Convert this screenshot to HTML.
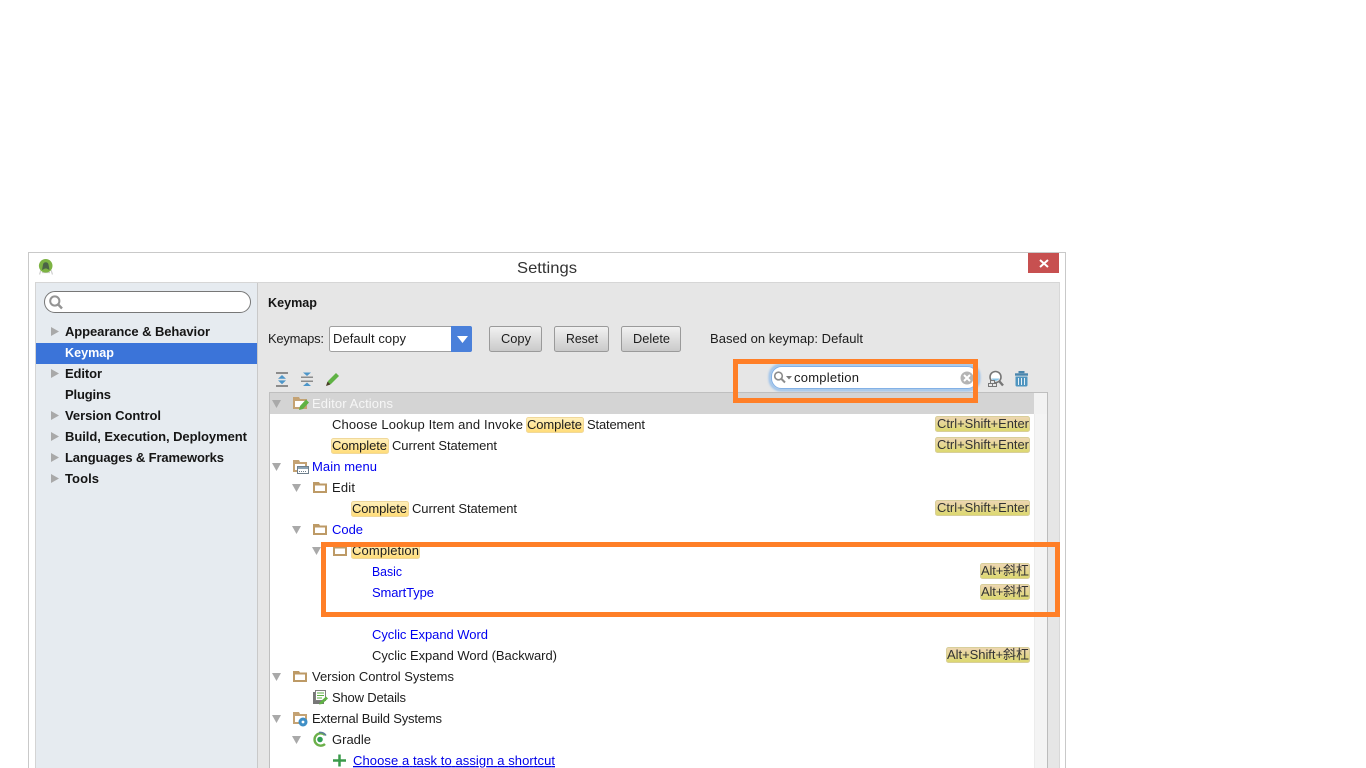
<!DOCTYPE html>
<html lang="en">
<head>
<meta charset="utf-8">
<title>Settings</title>
<style>
html,body{margin:0;padding:0;background:#fff;width:1366px;height:768px;overflow:hidden}
svg{display:block}
text{font-family:"Liberation Sans","Noto Sans CJK SC",sans-serif;font-size:13px;fill:#1c1c1c}
.b{font-weight:bold;fill:#151515}
.l{fill:#0000f0}
.k{fill:#333}
</style>
</head>
<body>
<svg width="1366" height="768" viewBox="0 0 1366 768" xmlns="http://www.w3.org/2000/svg">
<defs>
<linearGradient id="btn" x1="0" y1="0" x2="0" y2="1"><stop offset="0" stop-color="#f2f2f2"/><stop offset="1" stop-color="#c9c9c9"/></linearGradient>
<linearGradient id="sc" x1="0" y1="0" x2="0" y2="1"><stop offset="0" stop-color="#eed6b4"/><stop offset="1" stop-color="#dcd86e"/></linearGradient>
<linearGradient id="hl" x1="0" y1="0" x2="0" y2="1"><stop offset="0" stop-color="#fff0bc"/><stop offset="1" stop-color="#ffdc78"/></linearGradient>
<filter id="gl" x="-5%" y="-30%" width="110%" height="160%"><feGaussianBlur stdDeviation="1"/></filter>
<g id="tri"><path d="M0 0H9L4.500 8Z" fill="#a9a9a9"/></g>
<g id="tr"><path d="M0 0V9L8 4.500Z" fill="#a9a9a9"/></g>
<g id="fo"><path d="M0 0H6L7 1.500H14V11H0Z" fill="#bd9a66"/><rect x="2" y="3.500" width="10" height="5.500" fill="#fff"/></g>
<g id="fo2"><path d="M0 0H6L7 2H14V12H0Z" fill="#c4a273"/><rect x="2" y="4" width="10" height="6" fill="#fff"/></g>
</defs>

<!-- window -->
<rect x="28.500" y="252.500" width="1037" height="520" fill="#fff" stroke="#c9c9c9"/>
<rect x="36" y="282" width="1023" height="486" fill="#e6e6e6"/>
<rect x="36" y="282" width="1023" height="1" fill="#d6d6d6"/>
<rect x="1059" y="282" width="1" height="486" fill="#d8d8d8"/>
<rect x="36" y="283" width="221" height="485" fill="#e6ebf0"/>
<rect x="35" y="282" width="1" height="486" fill="#d4d4d4"/>
<rect x="257" y="283" width="1" height="485" fill="#c9c9c9"/>

<!-- title bar -->
<path d="M41 270L39.500 274.500M51 270L52.500 274.500M42 272.500H50" stroke="#cfcfcf" stroke-width="1.200" fill="none"/>
<circle cx="45.700" cy="265.800" r="6.800" fill="#7db343"/>
<path d="M43 264.500A2.800 2.800 0 0 1 48.500 264.500L49.500 270L46.500 268.500H45L42 270Z" fill="#4c6446"/>
<text x="517" y="273" style="font-size:16px;fill:#333" textLength="60" lengthAdjust="spacingAndGlyphs">Settings</text>
<rect x="1028" y="253" width="31" height="20" fill="#c75050"/>
<path d="M1040 260L1048 267M1048 260L1040 267" stroke="#fff" stroke-width="2"/>

<!-- sidebar -->
<rect x="44.500" y="291.500" width="206" height="21" rx="10.500" fill="#fff" stroke="#777"/>
<circle cx="54.800" cy="301" r="4.600" fill="none" stroke="#949494" stroke-width="2"/>
<path d="M58.200 304.500L62 308.500" stroke="#949494" stroke-width="2.400"/>
<rect x="36" y="343" width="221" height="21" fill="#3b74d9"/>
<use href="#tr" x="51" y="327"/>
<use href="#tr" x="51" y="369"/>
<use href="#tr" x="51" y="411"/>
<use href="#tr" x="51" y="432"/>
<use href="#tr" x="51" y="453"/>
<use href="#tr" x="51" y="474"/>
<text class="b" x="65" y="336" textLength="145">Appearance &amp; Behavior</text>
<text class="b" x="65" y="357" textLength="49" lengthAdjust="spacingAndGlyphs" style="fill:#fff">Keymap</text>
<text class="b" x="65" y="378" textLength="37">Editor</text>
<text class="b" x="65" y="399" textLength="46">Plugins</text>
<text class="b" x="65" y="420" textLength="96">Version Control</text>
<text class="b" x="65" y="441" textLength="182">Build, Execution, Deployment</text>
<text class="b" x="65" y="462" textLength="159">Languages &amp; Frameworks</text>
<text class="b" x="65" y="483" textLength="34">Tools</text>

<!-- header -->
<text class="b" x="268" y="307" textLength="49" lengthAdjust="spacingAndGlyphs">Keymap</text>
<text x="268" y="343" textLength="56">Keymaps:</text>
<rect x="329.500" y="326.500" width="142" height="25" rx="2" fill="#fff" stroke="#a0a0a0"/>
<path d="M451 326H470a2 2 0 0 1 2 2V350a2 2 0 0 1-2 2H451Z" fill="#4a80da"/>
<path d="M457 336H468L462.500 343Z" fill="#fff"/>
<text x="333" y="343" textLength="73">Default copy</text>
<rect x="489.500" y="326.500" width="52" height="25" rx="2" fill="url(#btn)" stroke="#9a9a9a"/>
<text x="501" y="343" textLength="30" lengthAdjust="spacingAndGlyphs">Copy</text>
<rect x="554.500" y="326.500" width="54" height="25" rx="2" fill="url(#btn)" stroke="#9a9a9a"/>
<text x="566" y="343" textLength="32" lengthAdjust="spacingAndGlyphs">Reset</text>
<rect x="621.500" y="326.500" width="59" height="25" rx="2" fill="url(#btn)" stroke="#9a9a9a"/>
<text x="633" y="343" textLength="37" lengthAdjust="spacingAndGlyphs">Delete</text>
<text x="710" y="343" textLength="153">Based on keymap: Default</text>

<!-- toolbar icons -->
<g>
<rect x="276" y="372" width="12" height="2" fill="#8c8c8c"/>
<rect x="276" y="385" width="12" height="2" fill="#8c8c8c"/>
<path d="M282 375L286 378.800H278ZM282 384.200L286 380.400H278Z" fill="#4d96c9"/>
<rect x="301" y="376.500" width="12" height="1.500" fill="#8c8c8c"/>
<rect x="301" y="380.500" width="12" height="1.500" fill="#8c8c8c"/>
<path d="M307 376L303 372.500H311ZM307 382.500L311 386H303Z" fill="#4d96c9"/>
<path d="M328 381L336 373L339 376L331 384L327 385.500Z" fill="#5fb244"/>
<path d="M326 386L327.500 381.500L330.500 384.500Z" fill="#4a3f28"/>
</g>

<!-- search -->
<rect x="770" y="365" width="209" height="25" rx="11" fill="none" stroke="#8fbcec" stroke-width="2.500" filter="url(#gl)"/>
<rect x="771.500" y="366.500" width="206" height="22" rx="10" fill="#fff" stroke="#83b1e6"/>
<circle cx="778.500" cy="376" r="3.800" fill="none" stroke="#8c8c8c" stroke-width="1.600"/>
<path d="M781.500 379L785 382.500" stroke="#8c8c8c" stroke-width="2"/>
<path d="M786 376H792L789 379.500Z" fill="#7a7a7a"/>
<text x="794" y="382" textLength="65">completion</text>
<circle cx="967" cy="378" r="6.500" fill="#b4b4b4"/>
<path d="M964 375L970 381M970 375L964 381" stroke="#fff" stroke-width="2"/>
<!-- find shortcut -->
<circle cx="995.500" cy="377" r="5.500" fill="#fff" stroke="#777" stroke-width="1.600"/>
<path d="M991.500 378.500A4.500 4.500 0 0 0 999.500 378.500Z" fill="#8cc4e6"/>
<path d="M999.500 381.500L1003 385.500" stroke="#777" stroke-width="2.400"/>
<rect x="988.500" y="383.500" width="4" height="3" fill="#e6e6e6" stroke="#777"/>
<rect x="992.500" y="383.500" width="4" height="3" fill="#e6e6e6" stroke="#777"/>
<rect x="990.500" y="380.500" width="4" height="3" fill="#e6e6e6" stroke="#777"/>
<!-- trash -->
<path d="M1015 374.500H1028" stroke="#4a86ad" stroke-width="2.400"/>
<rect x="1018.500" y="371" width="6" height="2.200" fill="#4a86ad"/>
<path d="M1015.500 376.500H1027.500V385a1.500 1.500 0 0 1-1.500 1.500H1017a1.500 1.500 0 0 1-1.500-1.500Z" fill="#4f95c0"/>
<path d="M1018.500 378V385M1021.500 378V385M1024.500 378V385" stroke="#e6f0f6"/>

<!-- tree -->
<rect x="269" y="392" width="778" height="376" fill="#fff"/>
<rect x="269" y="392" width="778" height="1" fill="#bfbfbf"/>
<rect x="269" y="392" width="1" height="376" fill="#bfbfbf"/>
<rect x="1047" y="392" width="1" height="376" fill="#bcbcbc"/>
<rect x="1034" y="393" width="13" height="375" fill="#f4f4f4"/>
<rect x="1034" y="393" width="1" height="375" fill="#ececec"/>
<rect x="270" y="393" width="764" height="21" fill="#d4d4d4"/>
<rect x="1034" y="393" width="13" height="21" fill="#f2f2f2"/>

<use href="#tri" x="272" y="400"/>
<use href="#tri" x="272" y="463"/>
<use href="#tri" x="292" y="484"/>
<use href="#tri" x="292" y="526"/>
<use href="#tri" x="312" y="547"/>
<use href="#tri" x="272" y="673"/>
<use href="#tri" x="272" y="715"/>
<use href="#tri" x="292" y="736"/>

<!-- folders -->
<use href="#fo2" x="293" y="397"/>
<path d="M300 406L306 399.500L309 402.500L303 409L299 410Z" fill="#5fb244"/>
<use href="#fo2" x="293" y="460"/>
<rect x="297.500" y="466.500" width="11" height="7" fill="#fff" stroke="#6e7f8c"/>
<rect x="298" y="467" width="10" height="2" fill="#8da3b3"/>
<path d="M299 471.500H307" stroke="#6e7f8c" stroke-dasharray="1 1"/>
<use href="#fo" x="313" y="482"/>
<use href="#fo" x="313" y="524"/>
<use href="#fo" x="333" y="545"/>
<use href="#fo" x="293" y="671"/>
<use href="#fo2" x="293" y="712"/>
<circle cx="303" cy="722" r="4.500" fill="#3f8fc6"/>
<circle cx="303" cy="722" r="1.400" fill="#fff"/>

<!-- show details icon -->
<rect x="313" y="692" width="11" height="12" fill="#777"/>
<rect x="315.500" y="690.500" width="10" height="10" fill="#fff" stroke="#808080"/>
<path d="M317 693H324M317 695.500H324M317 698H322" stroke="#5fb244"/>
<path d="M320 702L326 696.500L328 698.500L322 704L319 704.500Z" fill="#5fb244"/>

<!-- gradle icon -->
<path d="M325 735A6.200 6.200 0 1 0 325 744" fill="none" stroke="#6cb04a" stroke-width="2.400"/>
<path d="M319 732.500A7 7 0 0 1 326 735.500" fill="none" stroke="#5a7d9a" stroke-width="1.500"/>
<circle cx="320" cy="739.500" r="2.800" fill="#2f9e54"/>
<!-- plus -->
<path d="M339.500 754.500V766.500M333 760.500H346" stroke="#3a9a4a" stroke-width="2.500"/>

<!-- highlights -->
<rect x="526.500" y="417.500" width="57" height="15" rx="2" fill="url(#hl)" stroke="#f0d89a"/>
<rect x="331.500" y="438.500" width="57" height="15" rx="2" fill="url(#hl)" stroke="#f0d89a"/>
<rect x="351.500" y="501.500" width="57" height="15" rx="2" fill="url(#hl)" stroke="#f0d89a"/>
<rect x="351.500" y="543.500" width="68" height="15" rx="2" fill="url(#hl)" stroke="#f0d89a"/>

<!-- shortcut chips -->
<rect x="935.500" y="416.500" width="94" height="15" rx="2" fill="url(#sc)" stroke="#d8cf9a"/>
<rect x="935.500" y="437.500" width="94" height="15" rx="2" fill="url(#sc)" stroke="#d8cf9a"/>
<rect x="935.500" y="500.500" width="94" height="15" rx="2" fill="url(#sc)" stroke="#d8cf9a"/>
<rect x="980.500" y="563.500" width="49" height="15" rx="2" fill="url(#sc)" stroke="#d8cf9a"/>
<rect x="980.500" y="584.500" width="49" height="15" rx="2" fill="url(#sc)" stroke="#d8cf9a"/>
<rect x="946.500" y="647.500" width="83" height="15" rx="2" fill="url(#sc)" stroke="#d8cf9a"/>

<!-- tree text -->
<text x="312" y="408" textLength="81" style="fill:#f6f6f6">Editor Actions</text>
<text x="332" y="429" textLength="191">Choose Lookup Item and Invoke</text>
<text x="527" y="429" textLength="55">Complete</text>
<text x="587" y="429" textLength="58">Statement</text>
<text x="332" y="450" textLength="55">Complete</text>
<text x="392" y="450" textLength="105">Current Statement</text>
<text class="l" x="312" y="471" textLength="65">Main menu</text>
<text x="332" y="492" textLength="23">Edit</text>
<text x="352" y="513" textLength="55">Complete</text>
<text x="412" y="513" textLength="105">Current Statement</text>
<text class="l" x="332" y="534" textLength="31">Code</text>
<text x="352" y="555" textLength="67">Completion</text>
<text class="l" x="372" y="576" textLength="30" lengthAdjust="spacingAndGlyphs">Basic</text>
<text class="l" x="372" y="597" textLength="62">SmartType</text>
<text class="l" x="372" y="639" textLength="116">Cyclic Expand Word</text>
<text x="372" y="660" textLength="185">Cyclic Expand Word (Backward)</text>
<text x="312" y="681" textLength="142">Version Control Systems</text>
<text x="332" y="702" textLength="74">Show Details</text>
<text x="312" y="723" textLength="130">External Build Systems</text>
<text x="332" y="744" textLength="39">Gradle</text>
<text class="l" x="353" y="765" textLength="202" style="text-decoration:underline;fill:#0000e8">Choose a task to assign a shortcut</text>

<text class="k" x="937" y="428" textLength="92" lengthAdjust="spacingAndGlyphs">Ctrl+Shift+Enter</text>
<text class="k" x="937" y="449" textLength="92" lengthAdjust="spacingAndGlyphs">Ctrl+Shift+Enter</text>
<text class="k" x="937" y="512" textLength="92" lengthAdjust="spacingAndGlyphs">Ctrl+Shift+Enter</text>
<text class="k" x="981" y="575" textLength="48">Alt+斜杠</text>
<text class="k" x="981" y="596" textLength="48">Alt+斜杠</text>
<text class="k" x="947" y="659" textLength="82">Alt+Shift+斜杠</text>

<!-- orange annotations -->
<rect x="735.500" y="361.500" width="240" height="39" fill="none" stroke="#ff7f27" stroke-width="5"/>
<rect x="323.500" y="544.500" width="734" height="70" fill="none" stroke="#ff7f27" stroke-width="5"/>
</svg>
</body>
</html>
